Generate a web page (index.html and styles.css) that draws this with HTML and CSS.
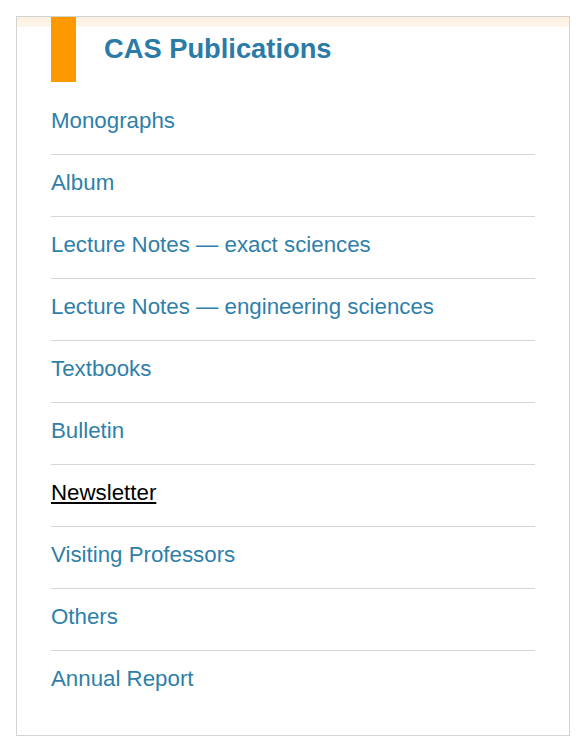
FILE: index.html
```html
<!DOCTYPE html>
<html>
<head>
<meta charset="utf-8">
<link rel="stylesheet" href="styles.css">
</head>
<body>
<div class="panel">
  <div class="panel-head">
    <span class="accent"></span>
    <h2 class="title">CAS Publications</h2>
  </div>
  <ul class="menu">
    <li class="item"><a class="link" href="#">Monographs</a></li>
    <li class="item"><a class="link" href="#">Album</a></li>
    <li class="item"><a class="link" href="#">Lecture Notes — exact sciences</a></li>
    <li class="item"><a class="link" href="#">Lecture Notes — engineering sciences</a></li>
    <li class="item"><a class="link" href="#">Textbooks</a></li>
    <li class="item"><a class="link" href="#">Bulletin</a></li>
    <li class="item"><a class="link link-active" href="#">Newsletter</a></li>
    <li class="item"><a class="link" href="#">Visiting Professors</a></li>
    <li class="item"><a class="link" href="#">Others</a></li>
    <li class="item"><a class="link" href="#">Annual Report</a></li>
  </ul>
</div>
</body>
</html>
```

FILE: styles.css
```css
html, body {
  margin: 0;
  padding: 0;
  background: #ffffff;
}
body {
  padding: 16px;
  font-family: "Liberation Sans", Arial, sans-serif;
}
.panel {
  box-sizing: border-box;
  width: 554px;
  height: 720px;
  border: 1px solid #d3d3d3;
  background: #ffffff;
}
.panel-head {
  display: flex;
  align-items: flex-start;
  height: 76px;
  padding: 0 34px;
  background: linear-gradient(to bottom, #fdf0df 0, #fef6ec 10px, #ffffff 10px);
}
.accent {
  display: block;
  flex: none;
  width: 25px;
  height: 65px;
  background: #ff9900;
}
.title {
  margin: 0 0 0 28px;
  padding-top: 16px;
  font-size: 27.3px;
  line-height: 32px;
  font-weight: bold;
  color: #2b7ba7;
}
.menu {
  list-style: none;
  margin: 0;
  padding: 0 34px 23px;
}
.item {
  padding: 15px 0 21px;
  line-height: 25px;
  font-size: 22.3px;
  border-bottom: 1px solid #d6d6d6;
}
.item:last-child {
  border-bottom: none;
}
.link {
  color: #2f7fa9;
  text-decoration: none;
}
.link-active {
  color: #000000;
  text-decoration: underline;
}
```
